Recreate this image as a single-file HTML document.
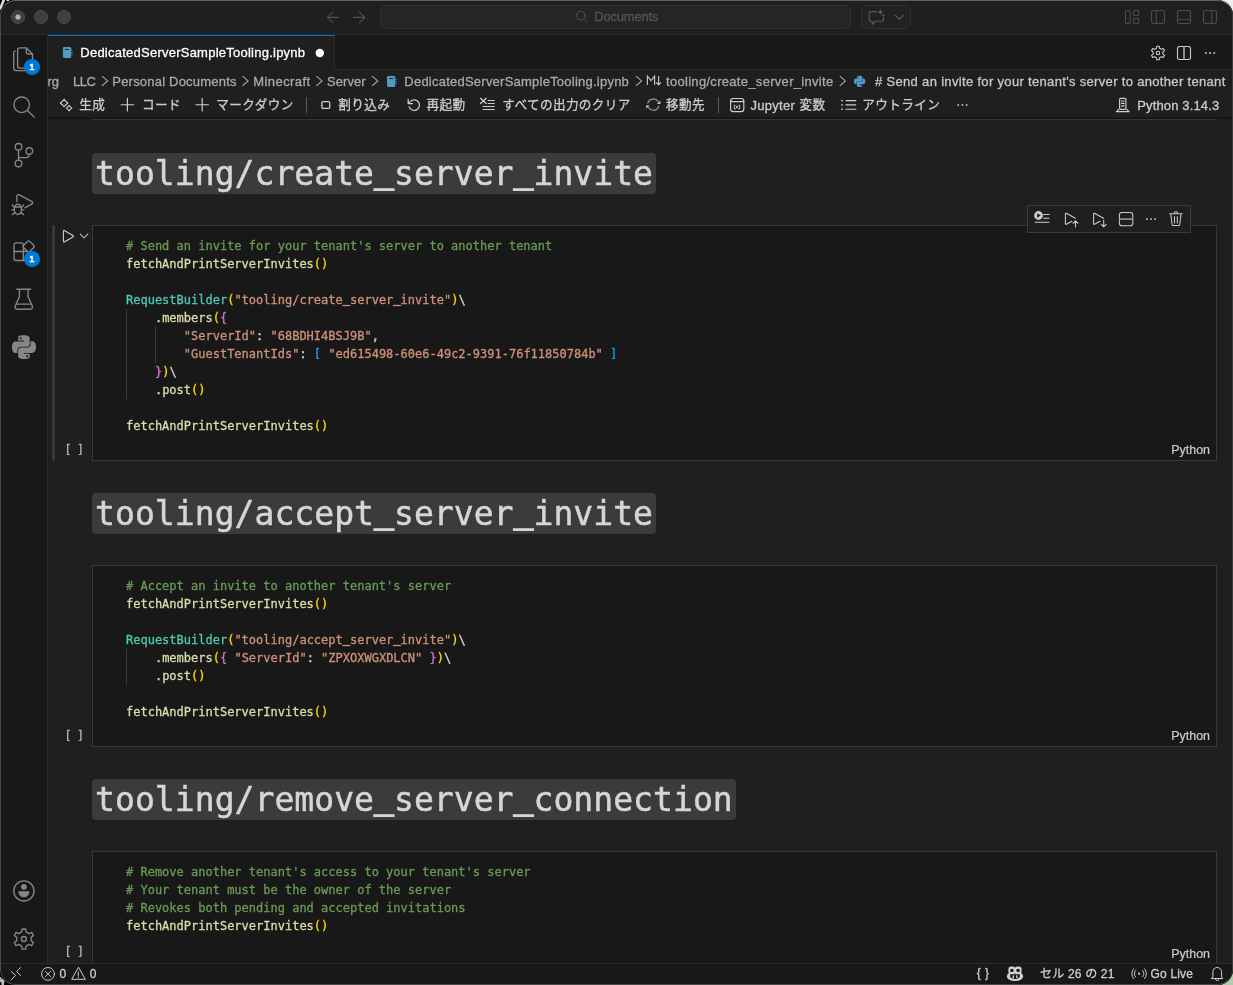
<!DOCTYPE html>
<html lang="ja">
<head>
<meta charset="utf-8">
<title>DedicatedServerSampleTooling.ipynb</title>
<style>
*{box-sizing:border-box;margin:0;padding:0}
html,body{width:1233px;height:985px;overflow:hidden;background:#000}
body{position:relative;font-family:"Liberation Sans","Noto Sans CJK JP",sans-serif;font-size:13px;color:#ccc}
.abs{position:absolute}
#win{left:0;top:0;width:1233px;height:985px;background:#1f1f1f;border-radius:15.5px;overflow:hidden;will-change:transform}
#winb{left:0;top:0;width:1233px;height:985px;border-radius:15.5px;border:1px solid #424242;border-top-color:#626262;border-left-color:#484848;border-right-color:#3c3c3c;border-bottom-color:#4a4a4a;pointer-events:none;z-index:50}
#title{left:0;top:0;width:1233px;height:35px;background:#1f1f1f;border-bottom:1px solid #2b2b2b}
.tl{top:10px;width:14px;height:14px;border-radius:50%;background:#3f3f3f;border:1px solid #4b4b4b}
#cc{left:380px;top:5px;width:471px;height:24px;border:1px solid #303030;border-radius:6px;background:#252525}
#chatbtn{left:861px;top:5px;width:50px;height:24px;border:1px solid #303030;border-radius:6px;background:#222}
#act{left:0;top:35px;width:48px;height:928px;background:#181818;border-right:1px solid #2b2b2b}
#tabs{left:48px;top:35px;width:1185px;height:35px;background:#181818;border-bottom:1px solid #2b2b2b}
#tab{left:0;top:0;width:287px;height:35px;background:#1f1f1f;border-top:1px solid #0078d4;border-right:1px solid #2b2b2b}
#crumbs{left:48px;top:70px;width:1185px;height:22px;background:#1f1f1f}
#nbtool{left:48px;top:92px;width:1185px;height:26px;background:#1f1f1f}
#nbshadow{left:48px;top:117px;width:1185px;height:4px;background:linear-gradient(rgba(12,12,12,.25),#131313 36%,rgba(20,20,20,.25) 62%,rgba(20,20,20,0));z-index:5}
#topline{left:92px;top:119px;width:1125px;height:1px;background:#36363b;z-index:6}
#nb{left:48px;top:118px;width:1185px;height:845px;background:#1f1f1f;overflow:hidden}
#status{left:0;top:963px;width:1233px;height:22px;background:#181818;border-top:1px solid #2b2b2b}
.t{position:absolute;white-space:pre;line-height:1;z-index:20;-webkit-text-stroke:0.3px}
.sep{position:absolute;width:1px;top:97px;height:16px;background:#5a5a5a}
.cell{position:absolute;left:44px;width:1125px;background:#181818;border:1px solid #36363b}
.cell.focus{border-color:#37373d}
.code{position:absolute;left:33px;top:11px;font-family:"DejaVu Sans Mono","Liberation Mono",monospace;font-size:12px;line-height:18px;white-space:pre;color:#d4d4d4;-webkit-text-stroke:0.3px}
.h1{position:absolute;left:44px;height:41px;background:#3b3b3b;border-radius:4px;font-family:"DejaVu Sans Mono","Liberation Mono",monospace;font-size:33.1px;line-height:41px;color:#d6d6d6;padding:0 2.9px 0 3.1px;letter-spacing:0.01px;white-space:pre;-webkit-text-stroke:0.5px}
.c{color:#6a9955}.f{color:#dcdcaa}.k{color:#4ec9b0}.s{color:#ce9178}.b1{color:#ffd700}.b2{color:#da70d6}.b3{color:#179fff}
.lang{position:absolute;left:1078.2px;margin-top:1px;font-size:12.4px;color:#ccc;line-height:1;letter-spacing:.05px;-webkit-text-stroke:.2px}
.exec{position:absolute;left:16.4px;margin-top:1px;font-family:"DejaVu Sans Mono","Liberation Mono",monospace;font-size:11.5px;color:#b4b4b4;line-height:1;letter-spacing:-0.6px;-webkit-text-stroke:0.3px}
.u{position:relative;top:-3.2px;-webkit-text-stroke:1.3px}
.code i{font-style:normal;position:relative;top:-1.1px;-webkit-text-stroke:.75px}
.guide{position:absolute;width:1px;background:#3a3a3a}
#focusbar{left:4px;top:107px;width:3px;height:236px;background:#37373d;border-radius:1.5px}
#celltb{left:979px;top:87px;width:164px;height:28px;background:#1f1f1f;border:1px solid #3a3a3f;z-index:3}
.badge{position:absolute;z-index:40;width:16px;height:16px;border-radius:8px;background:#0078d4;color:#fff;font-size:9.5px;-webkit-text-stroke:0.5px;text-align:center;line-height:16px}
#icons{left:0;top:0;z-index:30;pointer-events:none}
#txt{left:0;top:0;width:1233px;height:985px;will-change:transform;z-index:20;pointer-events:none}
</style>
</head>
<body>
<svg class="abs" style="left:0;top:0" width="1233" height="985" viewBox="0 0 1233 985">
<rect x="1217" y="0" width="16" height="16" fill="#f0f0f0"/>
<rect x="1217" y="969" width="16" height="16" fill="#b0ccaa"/>
<path d="M2.300 0h2.900l-3.600 8.500-1.600 2v-4.500z" fill="#dedede"/><rect x="6.600" y="0" width="2.400" height="1" fill="#ececec"/>
<path d="M0 977h1.200l.5 2.300 2.300-.2.500 2.300-.6 3.600h-2.300l-.400-3h-1.200z" fill="#bdbdbd"/>
</svg>
<div class="abs" id="win">
  <div class="abs" id="title">
    <div class="abs tl" style="left:11px"></div>
    <div class="abs tl" style="left:34px"></div>
    <div class="abs tl" style="left:57px"></div>
    <div class="abs" id="cc"></div>
    <div class="abs" id="chatbtn"></div>
  </div>
  <div class="abs" id="act">
    <div class="badge" style="left:24px;top:24px">1</div>
    <div class="badge" style="left:24px;top:216px">1</div>
  </div>
  <div class="abs" id="tabs">
    <div class="abs" id="tab"></div>
  </div>
  <div class="abs" id="crumbs"></div>
  <div class="abs" id="nbtool"></div>
  <div class="sep" style="left:306px"></div>
  <div class="sep" style="left:718px"></div>
  <div class="abs" id="nbshadow"></div>
  <div class="abs" id="topline"></div>
  <div class="abs" id="nb">
    <div class="h1" style="top:35px">tooling/create<span class="u">_</span>server<span class="u">_</span>invite</div>
    <div class="abs" id="focusbar"></div>
    <div class="cell focus" style="top:107px;height:236px">
<div class="code"><span class="c"># Send an invite for your tenant's server to another tenant</span>
<span class="f">fetchAndPrintServerInvites</span><span class="b1">()</span>

<span class="k">RequestBuilder</span><span class="b1">(</span><span class="s">"tooling/create<i>_</i>server<i>_</i>invite"</span><span class="b1">)</span>\
    .<span class="f">members</span><span class="b1">(</span><span class="b2">{</span>
        <span class="s">"ServerId"</span>: <span class="s">"68BDHI4BSJ9B"</span>,
        <span class="s">"GuestTenantIds"</span>: <span class="b3">[</span> <span class="s">"ed615498-60e6-49c2-9391-76f11850784b"</span> <span class="b3">]</span>
    <span class="b2">}</span><span class="b1">)</span>\
    .<span class="f">post</span><span class="b1">()</span>

<span class="f">fetchAndPrintServerInvites</span><span class="b1">()</span></div>
      <div class="guide" style="left:33px;top:83px;height:90px"></div>
      <div class="guide" style="left:62px;top:101px;height:36px"></div>
      <span class="lang" style="top:217px">Python</span>
    </div>
    <span class="exec" style="top:326px">[ ]</span>
    <div class="abs" id="celltb"></div>
    <div class="h1" style="top:375px">tooling/accept<span class="u">_</span>server<span class="u">_</span>invite</div>
    <div class="cell" style="top:447px;height:182px">
<div class="code"><span class="c"># Accept an invite to another tenant's server</span>
<span class="f">fetchAndPrintServerInvites</span><span class="b1">()</span>

<span class="k">RequestBuilder</span><span class="b1">(</span><span class="s">"tooling/accept<i>_</i>server<i>_</i>invite"</span><span class="b1">)</span>\
    .<span class="f">members</span><span class="b1">(</span><span class="b2">{</span> <span class="s">"ServerId"</span>: <span class="s">"ZPXOXWGXDLCN"</span> <span class="b2">}</span><span class="b1">)</span>\
    .<span class="f">post</span><span class="b1">()</span>

<span class="f">fetchAndPrintServerInvites</span><span class="b1">()</span></div>
      <div class="guide" style="left:33px;top:83px;height:36px"></div>
      <span class="lang" style="top:163px">Python</span>
    </div>
    <span class="exec" style="top:612px">[ ]</span>
    <div class="h1" style="top:661px">tooling/remove<span class="u">_</span>server<span class="u">_</span>connection</div>
    <div class="cell" style="top:733px;height:130px">
<div class="code"><span class="c"># Remove another tenant's access to your tenant's server</span>
<span class="c"># Your tenant must be the owner of the server</span>
<span class="c"># Revokes both pending and accepted invitations</span>
<span class="f">fetchAndPrintServerInvites</span><span class="b1">()</span></div>
      <span class="lang" style="top:95px">Python</span>
    </div>
    <span class="exec" style="top:828px">[ ]</span>
  </div>
  <div class="abs" id="status"></div>
<div class="abs" id="txt">
<span class="t" style="left:594.30px;top:10.00px;color:#555;letter-spacing:-0.217px;">Documents</span>
<span class="t" style="left:80.30px;top:46.00px;color:#fff;letter-spacing:0.241px;">DedicatedServerSampleTooling.ipynb</span>
<span class="t" style="left:47.50px;top:74.70px;color:#a9a9a9;">rg</span>
<span class="t" style="left:73.00px;top:74.70px;color:#a9a9a9;letter-spacing:-0.420px;">LLC</span>
<span class="t" style="left:112.30px;top:74.70px;color:#a9a9a9;letter-spacing:0.207px;">Personal Documents</span>
<span class="t" style="left:253.30px;top:74.70px;color:#a9a9a9;letter-spacing:0.415px;">Minecraft</span>
<span class="t" style="left:327.00px;top:74.70px;color:#a9a9a9;letter-spacing:0.051px;">Server</span>
<span class="t" style="left:404.30px;top:74.70px;color:#a9a9a9;letter-spacing:0.235px;">DedicatedServerSampleTooling.ipynb</span>
<span class="t" style="left:666.00px;top:74.70px;color:#a9a9a9;letter-spacing:0.304px;">tooling/create_server_invite</span>
<span class="t" style="left:875.00px;top:74.70px;color:#c8c8c8;letter-spacing:0.327px;"># Send an invite for your tenant's server to another tenant</span>
<span class="t" style="left:79.20px;top:99.03px;font-size:12.6px;letter-spacing:.4px;">生成</span>
<span class="t" style="left:142.00px;top:99.03px;font-size:12.6px;letter-spacing:.4px;">コード</span>
<span class="t" style="left:216.30px;top:99.03px;font-size:12.6px;letter-spacing:.4px;">マークダウン</span>
<span class="t" style="left:338.30px;top:99.03px;font-size:12.6px;letter-spacing:.4px;">割り込み</span>
<span class="t" style="left:426.60px;top:99.03px;font-size:12.6px;letter-spacing:.4px;">再起動</span>
<span class="t" style="left:502.30px;top:99.03px;font-size:12.6px;letter-spacing:.4px;">すべての出力のクリア</span>
<span class="t" style="left:666.00px;top:99.03px;font-size:12.6px;letter-spacing:.4px;">移動先</span>
<span class="t" style="left:750.50px;top:99.00px;letter-spacing:0.280px;">Jupyter</span>
<span class="t" style="left:799.40px;top:99.03px;font-size:12.6px;letter-spacing:.4px;">変数</span>
<span class="t" style="left:862.20px;top:99.03px;font-size:12.6px;letter-spacing:.4px;">アウトライン</span>
<span class="t" style="left:1137.20px;top:99.00px;letter-spacing:0.151px;">Python 3.14.3</span>
<span class="t" style="left:59.40px;top:967.84px;font-size:12px;">0</span>
<span class="t" style="left:89.80px;top:967.84px;font-size:12px;">0</span>
<span class="t" style="left:976.80px;top:967.04px;font-size:12px;letter-spacing:0.414px;">{ }</span>
<span class="t" style="left:1040.00px;top:967.84px;font-size:12px;letter-spacing:0.190px;">セル 26 の 21</span>
<span class="t" style="left:1150.60px;top:967.84px;font-size:12px;letter-spacing:0.163px;">Go Live</span>
</div>
<svg class="abs" id="icons" width="1233" height="985" viewBox="0 0 1233 985" fill="none" stroke-linecap="round" stroke-linejoin="round">
<circle cx="18" cy="17" r="2.6" fill="#b4b4b4"/>
<g stroke="#505050" stroke-width="1.1"><path d="M338.8 17.4H327.4M333 12.1l-5.6 5.3 5.6 5.4"/><path d="M353.3 17.4h11.5M359.3 12.1l5.6 5.3-5.6 5.4"/></g>
<g stroke="#525252" stroke-width="1"><circle cx="580.7" cy="15.6" r="4.4"/><path d="M583.9 18.8l3.4 3.2"/></g>
<g stroke="#5a5a5a" stroke-width="1.1"><path d="M876.5 11.6h-5.3a2 2 0 0 0-2 2v5.6a2 2 0 0 0 2 2h1v3l3.8-3h5.5a2 2 0 0 0 2-2v-1.4"/><path d="M895.3 15.3l4 3.8 4-3.8"/></g>
<path d="M880.3 9l.9 2.2 2.2.9-2.2.9-.9 2.2-.9-2.2-2.2-.9 2.2-.9z M883.2 13.6l.6 1.3 1.3.6-1.3.6-.6 1.3-.6-1.3-1.3-.6 1.3-.6z" fill="#5a5a5a"/>
<g stroke="#4c4c4c" stroke-width="1.1"><rect x="1125.5" y="10.5" width="4.6" height="13" rx="1"/><rect x="1133.5" y="10.5" width="5" height="5" rx="1"/><rect x="1133.5" y="18.5" width="5" height="5" rx="1"/><rect x="1151.5" y="10.5" width="13" height="13" rx="2.2"/><path d="M1156.3 10.5v13"/><rect x="1177.5" y="10.5" width="13" height="13" rx="2.2"/><path d="M1177.5 19.8h13"/><rect x="1203.5" y="10.5" width="13" height="13" rx="2.2"/><path d="M1211.7 10.5v13"/></g><g stroke="#868686" stroke-width="1.35">
<path d="M19.6 47.9h6.9l6 6v12.2a2 2 0 0 1-2 2h-10.9a2 2 0 0 1-2-2v-16.2a2 2 0 0 1 2-2z"/><path d="M26.3 48v4.4a1.6 1.6 0 0 0 1.6 1.6h4.4"/><path d="M15.2 50.9a1.9 1.9 0 0 0-1.5 1.9v14.6a3.2 3.2 0 0 0 3.2 3.2h9.3a1.9 1.9 0 0 0 1.9-1.5"/>
<circle cx="21.7" cy="104.8" r="7.8"/><path d="M27.4 110.5l6.7 6.5"/>
<circle cx="18.5" cy="146.8" r="3.3"/><circle cx="29.3" cy="151" r="3.3"/><circle cx="18.5" cy="163.4" r="3.3"/><path d="M18.5 150.1v10M29.3 154.3v.3a3 3 0 0 1-3 3h-7.8"/>
<path d="M16.9 201.6v-5.3a1.7 1.7 0 0 1 2.5-1.5l12.6 6.9a1.2 1.2 0 0 1 0 2.1l-7.1 4.1"/>
<path d="M14.4 207h7v3.8a3.5 3.5 0 0 1-7 0z"/><path d="M15.4 206.6a2.5 2.5 0 0 1 5 0"/><path d="M14.3 207.2l-2.1-2.2M14.3 209.8h-2.3M14.9 212.6l-2.6 2M21.5 207.2l2.1-2.2M21.5 209.8h2.3M20.9 212.6l2.6 2"/>
<path d="M23.35 251.5V244.8a2 2 0 0 0-2-2h-5.3a2 2 0 0 0-2 2v13.7a2 2 0 0 0 2 2h9"/><path d="M14.05 251.5h13M23.35 251.5v9"/><path d="M27.5 241.4a1.6 1.6 0 0 1 2.3 0l3.9 3.9a1.6 1.6 0 0 1 0 2.3l-3.9 3.9a1.6 1.6 0 0 1-2.3 0l-3.9-3.9a1.6 1.6 0 0 1 0-2.3z"/>
<path d="M16.8 289.2h13.9M19.4 289.2v7.6l-4.2 9.3a2.2 2.2 0 0 0 2 3.1h13.1a2.2 2.2 0 0 0 2-3.1l-4.2-9.3v-7.6M16.6 304.1h14.3"/>
<circle cx="23.9" cy="890.9" r="10.1"/>
<path d="M26.08 931.93 L25.65 928.95 L22.15 928.95 L21.72 931.93 L18.86 933.58 L16.07 932.46 L14.32 935.49 L16.69 937.35 L16.69 940.65 L14.32 942.51 L16.07 945.54 L18.86 944.42 L21.72 946.07 L22.15 949.05 L25.65 949.05 L26.08 946.07 L28.94 944.42 L31.73 945.54 L33.48 942.51 L31.11 940.65 L31.11 937.35 L33.48 935.49 L31.73 932.46 L28.94 933.58Z"/><circle cx="23.9" cy="939" r="2.5"/>
</g>
<circle cx="23.9" cy="886.8" r="2.9" fill="#868686"/><path d="M18.4 891.3h11v.6a5.5 5.4 0 0 1-11 0z" fill="#868686"/>
<path transform="translate(12 335.2) scale(0.995)" d="M14.25.18l.9.2.73.26.59.3.45.32.34.34.25.34.16.33.1.3.04.26.02.2-.01.13V8.5l-.05.63-.13.55-.21.46-.26.38-.3.31-.33.25-.35.19-.35.14-.33.1-.3.07-.26.04-.21.02H8.77l-.69.05-.59.14-.5.22-.41.27-.33.32-.27.35-.2.36-.15.37-.1.35-.07.32-.04.27-.02.21v3.06H3.17l-.21-.03-.28-.07-.32-.12-.35-.18-.36-.26-.36-.36-.35-.46-.32-.59-.28-.73-.21-.88-.14-1.05-.05-1.23.06-1.22.16-1.04.24-.87.32-.71.36-.57.4-.44.42-.33.42-.24.4-.16.36-.1.32-.05.24-.01h.16l.06.01h8.16v-.83H6.18l-.01-2.75-.02-.37.05-.34.11-.31.17-.28.25-.26.31-.23.38-.2.44-.18.51-.15.58-.12.64-.1.71-.06.77-.04.84-.02 1.27.05zm-6.3 1.98l-.23.33-.08.41.08.41.23.34.33.22.41.09.41-.09.33-.22.23-.34.08-.41-.08-.41-.23-.33-.33-.22-.41-.09-.41.09zm13.09 3.95l.28.06.32.12.35.18.36.27.36.35.35.47.32.59.28.73.21.88.14 1.04.05 1.23-.06 1.23-.16 1.04-.24.86-.32.71-.36.57-.4.45-.42.33-.42.24-.4.16-.36.09-.32.05-.24.02-.16-.01h-8.22v.82h5.84l.01 2.76.02.36-.05.34-.11.31-.17.29-.25.25-.31.24-.38.2-.44.17-.51.15-.58.13-.64.09-.71.07-.77.04-.84.01-1.27-.04-1.07-.14-.9-.2-.73-.25-.59-.3-.45-.33-.34-.34-.25-.34-.16-.33-.1-.3-.04-.25-.02-.2.01-.13v-5.34l.05-.64.13-.54.21-.46.26-.38.3-.32.33-.24.35-.2.35-.14.33-.1.3-.06.26-.04.21-.02.13-.01h5.84l.69-.05.59-.14.5-.21.41-.28.33-.32.27-.35.2-.36.15-.36.1-.35.07-.32.04-.28.02-.21V6.07h2.09l.14.01zm-6.47 14.25l-.23.33-.08.41.08.41.23.33.33.23.41.08.41-.08.33-.23.23-.33.08-.41-.08-.41-.23-.33-.33-.23-.41-.08-.41.08z" fill="#868686" fill-rule="evenodd"/><rect x="62.9" y="46.9" width="8.3" height="11" rx="1.3" fill="#4f9cc0"/><rect x="65.0" y="49.0" width="4" height="1.1" rx=".5" fill="#16212a"/><path d="M71.2 50.5h1.6M71.2 52.6h1.6M71.2 54.699999999999996h1.6" stroke="#3b6f88" stroke-width="1.2" stroke-linecap="butt"/>
<circle cx="319.8" cy="53" r="4.2" fill="#fff"/>
<rect x="387.0" y="75.9" width="8.3" height="11" rx="1.3" fill="#4f9cc0"/><rect x="389.1" y="78.0" width="4" height="1.1" rx=".5" fill="#16212a"/><path d="M395.3 79.5h1.6M395.3 81.60000000000001h1.6M395.3 83.7h1.6" stroke="#3b6f88" stroke-width="1.2" stroke-linecap="butt"/>
<g stroke="#ccc" stroke-width="1.1"><path d="M1159.47 48.22 L1159.19 46.20 L1156.81 46.20 L1156.53 48.22 L1154.60 49.34 L1152.71 48.57 L1151.52 50.63 L1153.13 51.88 L1153.13 54.12 L1151.52 55.37 L1152.71 57.43 L1154.60 56.66 L1156.53 57.78 L1156.81 59.80 L1159.19 59.80 L1159.47 57.78 L1161.40 56.66 L1163.29 57.43 L1164.48 55.37 L1162.87 54.12 L1162.87 51.88 L1164.48 50.63 L1163.29 48.57 L1161.40 49.34Z"/><circle cx="1158" cy="53" r="1.7"/><rect x="1177.5" y="46.5" width="13" height="13" rx="2.2"/></g>
<path d="M1184 46.5v13" stroke="#9a9a9a" stroke-width="1.8" stroke-linecap="butt"/>
<g fill="#ccc"><rect x="1205" y="52.2" width="1.7" height="1.7"/><rect x="1209.2" y="52.2" width="1.7" height="1.7"/><rect x="1213.4" y="52.2" width="1.7" height="1.7"/></g>
<path d="M102.0 76.1l5.6 4.8-5.6 5 M242.5 76.1l5.6 4.8-5.6 5 M316.4 76.1l5.6 4.8-5.6 5 M372.1 76.1l5.6 4.8-5.6 5 M636.0 76.1l5.6 4.8-5.6 5 M839.8 76.1l5.6 4.8-5.6 5 " stroke="#a9a9a9" stroke-width="1.1" stroke-linecap="butt" stroke-linejoin="miter"/>
<path d="M647.4 85V76.1l3.6 4.4 3.6-4.4V85M658.6 76.1V85M656.2 82.3l2.4 2.7 2.4-2.7" stroke="#c5c5c5" stroke-width="1.15" stroke-linecap="butt" stroke-linejoin="miter"/>
<path transform="translate(854 75.7) scale(0.467)" d="M14.25.18l.9.2.73.26.59.3.45.32.34.34.25.34.16.33.1.3.04.26.02.2-.01.13V8.5l-.05.63-.13.55-.21.46-.26.38-.3.31-.33.25-.35.19-.35.14-.33.1-.3.07-.26.04-.21.02H8.77l-.69.05-.59.14-.5.22-.41.27-.33.32-.27.35-.2.36-.15.37-.1.35-.07.32-.04.27-.02.21v3.06H3.17l-.21-.03-.28-.07-.32-.12-.35-.18-.36-.26-.36-.36-.35-.46-.32-.59-.28-.73-.21-.88-.14-1.05-.05-1.23.06-1.22.16-1.04.24-.87.32-.71.36-.57.4-.44.42-.33.42-.24.4-.16.36-.1.32-.05.24-.01h.16l.06.01h8.16v-.83H6.18l-.01-2.75-.02-.37.05-.34.11-.31.17-.28.25-.26.31-.23.38-.2.44-.18.51-.15.58-.12.64-.1.71-.06.77-.04.84-.02 1.27.05zm-6.3 1.98l-.23.33-.08.41.08.41.23.34.33.22.41.09.41-.09.33-.22.23-.34.08-.41-.08-.41-.23-.33-.33-.22-.41-.09-.41.09zm13.09 3.95l.28.06.32.12.35.18.36.27.36.35.35.47.32.59.28.73.21.88.14 1.04.05 1.23-.06 1.23-.16 1.04-.24.86-.32.71-.36.57-.4.45-.42.33-.42.24-.4.16-.36.09-.32.05-.24.02-.16-.01h-8.22v.82h5.84l.01 2.76.02.36-.05.34-.11.31-.17.29-.25.25-.31.24-.38.2-.44.17-.51.15-.58.13-.64.09-.71.07-.77.04-.84.01-1.27-.04-1.07-.14-.9-.2-.73-.25-.59-.3-.45-.33-.34-.34-.25-.34-.16-.33-.1-.3-.04-.25-.02-.2.01-.13v-5.34l.05-.64.13-.54.21-.46.26-.38.3-.32.33-.24.35-.2.35-.14.33-.1.3-.06.26-.04.21-.02.13-.01h5.84l.69-.05.59-.14.5-.21.41-.28.33-.32.27-.35.2-.36.15-.36.1-.35.07-.32.04-.28.02-.21V6.07h2.09l.14.01zm-6.47 14.25l-.23.33-.08.41.08.41.23.33.33.23.41.08.41-.08.33-.23.23-.33.08-.41-.08-.41-.23-.33-.33-.23-.41-.08-.41.08z" fill="#4f9cc8" fill-rule="evenodd"/>
<g stroke="#cfcfcf" stroke-width="1.15">
<path d="M64.1 99.20Q65.62 101.48 67.90 103Q65.62 104.52 64.1 106.80Q62.58 104.52 60.30 103Q62.58 101.48 64.1 99.20ZM69.1 105.40Q70.18 107.02 71.80 108.1Q70.18 109.18 69.1 110.80Q68.02 109.18 66.40 108.1Q68.02 107.02 69.1 105.40Z" stroke-width="1.1"/>
<path d="M127.4 98.4v12.6M121.1 104.7h12.6M202.2 98.4v12.6M195.9 104.7h12.6"/>
<rect x="321.9" y="101.6" width="7.8" height="6.8" rx="1.2" stroke-width="1.3"/>
<path d="M410.6 101.2a5.3 5.3 0 1 1-1.45 5.6" stroke-width="1.25"/><path d="M408.2 99.3v4.3h4.2" stroke-width="1.25" stroke-linejoin="miter"/><path d="M408.2 100.6v3h3z" fill="#cfcfcf" stroke="none"/>
<path d="M480.5 98.3l5.7 5.2M486.2 98.3l-5.7 5.2" stroke-width="1.25"/><path d="M487.7 100.5h7M487.7 103.5h7M482.6 106.5h12.100M482.6 109.5h12.100" stroke-linecap="butt"/>
<rect x="730.6" y="98.5" width="13.2" height="13.1" rx="2.7"/><path d="M730.6 101.6h13.2"/>
<path d="M846 100.6h9.8M846 104.9h9.8M846 109.2h9.8"/>
<rect x="1119.6" y="98.3" width="6.3" height="11" rx="1"/><path d="M1121.4 101h2.7M1121.4 103.4h2.7M1121.4 105.8h2.7M1118.7 109.3l-2.3 2.3h12.7l-2.3-2.3"/>
</g>
<g fill="#ccc"><rect x="841.3" y="99.9" width="1.5" height="1.5"/><rect x="841.3" y="104.2" width="1.5" height="1.5"/><rect x="841.3" y="108.5" width="1.5" height="1.5"/><rect x="957.4" y="104.2" width="1.6" height="1.6"/><rect x="961.6" y="104.2" width="1.6" height="1.6"/><rect x="965.8" y="104.2" width="1.6" height="1.6"/></g>
<path d="M734.3 105v4h.9M739.7 105v4h-.9M735.9 105.6l2.2 2.8M738.1 105.6l-2.2 2.8" stroke="#c4c4c4" stroke-width=".95"/>
<g stroke="#9a9a9a" stroke-width="1.2"><path d="M647.8 103a5.7 5.7 0 0 1 10.300-1.300M658.8 106.200a5.7 5.7 0 0 1-10.300 1.300"/></g><path d="M660.4 100.400v3.500h-3.500zM646.200 108.800v-3.500h3.500z" fill="#c4c4c4"/>
<g stroke="#ccc" stroke-width="1.1"><path d="M63.4 231v10.4a.6.6 0 0 0 .9.5l9-5.2a.6.6 0 0 0 0-1l-9-5.2a.6.6 0 0 0-.9.5z"/><path d="M80.3 234l3.8 3.8 3.8-3.8" stroke="#b0b0b0"/></g>
<circle cx="1038.5" cy="215.5" r="4.4" fill="#ccc"/><path d="M1037.2 213.3v4.4l3.6-2.2z" fill="#1f1f1f"/>
<g stroke="#ccc" stroke-width="1.05">
<path d="M1043.6 214.4h5.5M1043.6 218.3h5.5M1035.1 222.3h14"/>
<path d="M1075.3 218.2l-9-4.9a.6.6 0 0 0-.9.5v10a.6.6 0 0 0 .9.5l5.6-3"/><path d="M1075.5 227v-6M1073 223.3l2.5-2.5 2.5 2.5"/>
<path d="M1103.5 218.2l-9-4.9a.6.6 0 0 0-.9.5v10a.6.6 0 0 0 .9.5l5.6-3"/><path d="M1103.7 220.3v6.4M1101.2 224.4l2.5 2.5 2.5-2.5"/>
<rect x="1119.4" y="212.4" width="13.4" height="13.4" rx="2.6"/>
<path d="M1169.6 213.8h12.6M1174 213.6a1.9 1.9 0 0 1 3.8 0M1170.8 214l1.2 10.2a1.6 1.6 0 0 0 1.6 1.4h4.6a1.6 1.6 0 0 0 1.6-1.4l1.2-10.2M1174.5 216.4v6.6M1177.3 216.4v6.6"/>
</g>
<path d="M1119.4 219.1h13.4" stroke="#8c8c8c" stroke-width="1.8" stroke-linecap="butt"/>
<g fill="#ccc"><rect x="1146.1" y="218.3" width="1.6" height="1.6"/><rect x="1150.2" y="218.3" width="1.6" height="1.6"/><rect x="1154.3" y="218.3" width="1.6" height="1.6"/></g>
<g stroke="#ccc" stroke-width="1">
<path d="M21 967.3l-4.4 4.3 4.4 4.2M11.2 971.4l4.4 4.1-4.4 4.2" stroke-linecap="butt" stroke-linejoin="miter"/>
<circle cx="48" cy="973.9" r="6.4"/><path d="M45.4 971.3l5.2 5.2M50.6 971.3l-5.2 5.2"/>
<path d="M78.3 967.6l-6.6 11.7h13.2zM78.3 972v3.6"/>
<path d="M1135.6 970.6a4.6 4.6 0 0 0 0 6.2M1142.6 970.6a4.6 4.6 0 0 1 0 6.2M1133.6 968.8a7.2 7.2 0 0 0 0 9.8M1144.6 968.8a7.2 7.2 0 0 1 0 9.8"/>
<path d="M1212.9 977.3v-5.5a4.35 4.35 0 0 1 8.7 0v5.5l1.5 1.2h-11.700zM1215.300 979a2 2 0 0 0 3.900 0"/>
</g>
<circle cx="1139.1" cy="973.7" r="1.1" fill="#ccc"/><circle cx="78.3" cy="977.3" r=".7" fill="#ccc"/>
<ellipse cx="1015" cy="976.2" rx="8.1" ry="4.9" fill="#d2d2d2"/><rect x="1008.4" y="966.6" width="6.9" height="7.4" rx="2.7" fill="#d2d2d2"/><rect x="1014.7" y="966.6" width="6.9" height="7.4" rx="2.7" fill="#d2d2d2"/><ellipse cx="1011.9" cy="970.4" rx="1.75" ry="1.6" fill="#181818"/><ellipse cx="1018.1" cy="970.4" rx="1.75" ry="1.6" fill="#181818"/><path d="M1010.2 974.3h9.600v2.300c0 1.300-2.100 2.300-4.800 2.300s-4.800-1-4.800-2.300z" fill="#181818"/><path d="M1015 973.2l-.9 1.100h1.800z" fill="#181818"/><rect x="1012.6" y="975.2" width="1.4" height="2.900" rx=".5" fill="#d2d2d2"/><rect x="1016.100" y="975.2" width="1.4" height="2.900" rx=".5" fill="#d2d2d2"/>
</svg>
  <div class="abs" id="winb"></div>
</div>
</body>
</html>
